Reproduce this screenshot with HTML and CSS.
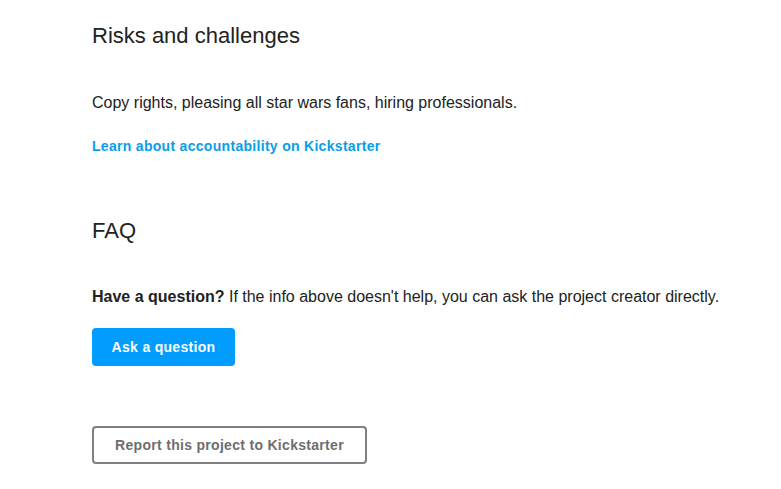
FILE: index.html
```html
<!DOCTYPE html>
<html>
<head>
<meta charset="utf-8">
<link rel="stylesheet" href="styles.css">
</head>
<body>
<main class="page">
  <section class="section risks">
    <h2 class="title">Risks and challenges</h2>
    <p class="text">Copy rights, pleasing all star wars fans, hiring professionals.</p>
    <a class="link" href="#">Learn about accountability on Kickstarter</a>
  </section>
  <section class="section faq">
    <h2 class="title">FAQ</h2>
    <p class="text"><strong>Have a question?</strong> If the info above doesn't help, you can ask the project creator directly.</p>
    <button class="btn btn-primary">Ask a question</button>
  </section>
  <section class="section report">
    <button class="btn btn-outline">Report this project to Kickstarter</button>
  </section>
</main>
</body>
</html>
```
FILE: styles.css
```css
html, body {
  margin: 0;
  padding: 0;
  background: #ffffff;
}
body {
  font-family: "Liberation Sans", Arial, sans-serif;
  color: #282828;
}
.page {
  padding: 22px 0 0 92px;
}
.section {
  display: flex;
  flex-direction: column;
  align-items: flex-start;
}
.title {
  margin: 0;
  font-size: 22px;
  font-weight: 400;
  line-height: 28px;
  color: #222;
}
.text {
  margin: 0;
  font-size: 16px;
  line-height: 22px;
  color: #222;
}
.text strong {
  font-weight: 700;
}
.risks .text {
  margin-top: 42px;
}
.link {
  margin-top: 23px;
  font-size: 14px;
  font-weight: 700;
  letter-spacing: 0.3px;
  color: #0b9ee8;
  text-decoration: none;
  line-height: 18px;
}
.faq {
  margin-top: 62px;
}
.faq .text {
  margin-top: 41px;
}
.btn {
  font-family: "Liberation Sans", Arial, sans-serif;
  font-size: 14px;
  font-weight: 700;
  letter-spacing: 0.3px;
  border-radius: 4px;
  cursor: pointer;
}
.btn-primary {
  margin-top: 20px;
  width: 143px;
  height: 38px;
  background: #009dff;
  color: #fff;
  border: none;
}
.report {
  margin-top: 60px;
}
.btn-outline {
  width: 275px;
  height: 38px;
  background: #fff;
  color: #6e6e6e;
  border: 2px solid #808080;
}
```
